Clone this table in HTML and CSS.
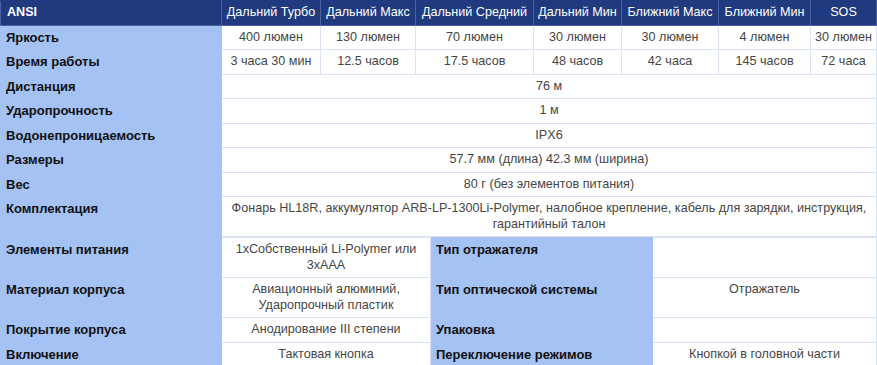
FILE: index.html
```html
<!DOCTYPE html>
<html lang="ru">
<head>
<meta charset="utf-8">
<link rel="stylesheet" href="styles.css">
</head>
<body>
<table class="spec">
  <colgroup>
    <col class="c-label"><col class="c1"><col class="c2"><col class="c3"><col class="c4"><col class="c5"><col class="c6"><col class="c7">
  </colgroup>
  <tr class="head">
    <th class="lh">ANSI</th><th>Дальний Турбо</th><th>Дальний Макс</th><th>Дальний Средний</th><th>Дальний Мин</th><th>Ближний Макс</th><th>Ближний Мин</th><th>SOS</th>
  </tr>
  <tr><th class="lab">Яркость</th><td>400 люмен</td><td>130 люмен</td><td>70 люмен</td><td>30 люмен</td><td>30 люмен</td><td>4 люмен</td><td>30 люмен</td></tr>
  <tr><th class="lab">Время работы</th><td>3 часа 30 мин</td><td>12.5 часов</td><td>17.5 часов</td><td>48 часов</td><td>42 часа</td><td>145 часов</td><td>72 часа</td></tr>
  <tr><th class="lab">Дистанция</th><td colspan="7">76 м</td></tr>
  <tr><th class="lab">Ударопрочность</th><td colspan="7">1 м</td></tr>
  <tr><th class="lab">Водонепроницаемость</th><td colspan="7">IPX6</td></tr>
  <tr><th class="lab">Размеры</th><td colspan="7">57.7 мм (длина) 42.3 мм (ширина)</td></tr>
  <tr><th class="lab">Вес</th><td colspan="7">80 г (без элементов питания)</td></tr>
  <tr><th class="lab">Комплектация</th><td colspan="7">Фонарь HL18R, аккумулятор ARB-LP-1300Li-Polymer, налобное крепление, кабель для зарядки, инструкция, гарантийный талон</td></tr>
</table>
<table class="spec">
  <colgroup>
    <col class="c-label"><col class="d1"><col class="d2"><col class="d3">
  </colgroup>
  <tr><th class="lab">Элементы питания</th><td>1xСобственный Li-Polymer или 3xAAA</td><th class="lab">Тип отражателя</th><td></td></tr>
  <tr><th class="lab">Материал корпуса</th><td>Авиационный алюминий, Ударопрочный пластик</td><th class="lab">Тип оптической системы</th><td>Отражатель</td></tr>
  <tr><th class="lab">Покрытие корпуса</th><td>Анодирование III степени</td><th class="lab">Упаковка</th><td></td></tr>
  <tr><th class="lab">Включение</th><td>Тактовая кнопка</td><th class="lab">Переключение режимов</th><td>Кнопкой в головной части</td></tr>
</table>
</body>
</html>
```
FILE: styles.css
```css
html, body {
  margin: 0;
  padding: 0;
  background: #ffffff;
}
body {
  font-family: "Liberation Sans", Arial, sans-serif;
  font-size: 12.6px;
  width: 877px;
}
.spec {
  width: 876px;
  table-layout: fixed;
  border-collapse: collapse;
}
.c-label { width: 221px; }
.c1 { width: 99px; }
.c2 { width: 95px; }
.c3 { width: 118px; }
.c4 { width: 88px; }
.c5 { width: 97px; }
.c6 { width: 92px; }
.c7 { width: 66px; }
.d1 { width: 209px; }
.d2 { width: 222px; }
.d3 { width: 224px; }

.spec th, .spec td {
  padding: 4px 2px;
  line-height: 15.5px;
  vertical-align: top;
}
.spec td {
  color: #454545;
  text-align: center;
  border: 1px solid #dbe2f4;
  background: #ffffff;
}
.spec .head th {
  background: #1f3a7e;
  color: #ffffff;
  font-weight: normal;
  text-align: center;
  white-space: nowrap;
  border: 1px solid #4a63a0;
  border-top-color: #1f3a7e;
}
.spec .head th.lh {
  text-align: left;
  font-weight: bold;
  padding-left: 6px;
}
.spec .lab {
  background: #a4c2f4;
  color: #111111;
  font-size: 13px;
  font-weight: bold;
  text-align: left;
  padding-left: 5px;
  border: 1px solid #a4c2f4;
}
```
